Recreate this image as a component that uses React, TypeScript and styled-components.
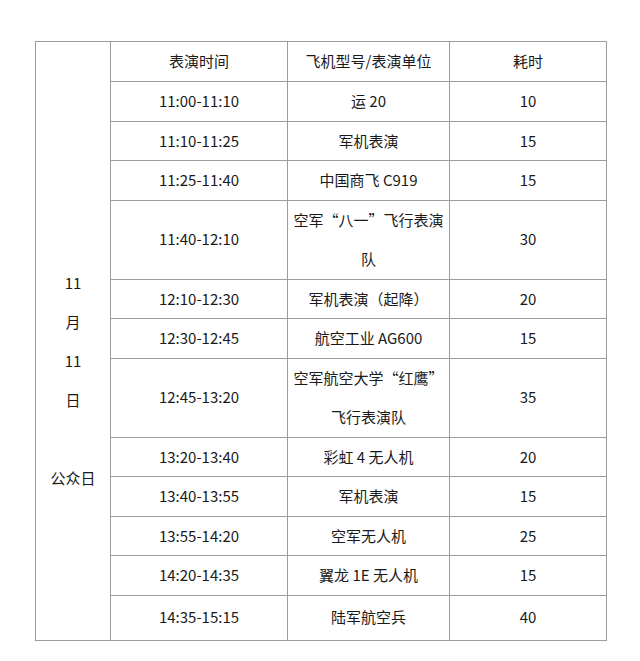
import { Fragment } from 'react';
import styled, { createGlobalStyle } from 'styled-components';

const GlobalStyle = createGlobalStyle`
  html, body {
    margin: 0;
    padding: 0;
    background: #fff;
  }
  body {
    font-family: "Noto Sans CJK SC", "Noto Sans", sans-serif;
    color: #1a1a1a;
  }
`;

const Page = styled.div`
  width: 640px;
  height: 661px;
  padding: 41px 0 0 35px;
  box-sizing: border-box;
  background: #fff;
`;

const Table = styled.table`
  border-collapse: collapse;
  table-layout: fixed;
  width: 571px;
  font-size: 15px;
`;

const Cell = styled.td`
  border: 1px solid #9c9c9c;
  text-align: center;
  vertical-align: middle;
  padding: 0;
  line-height: 38.5px;
  white-space: nowrap;
`;

const DateCell = styled(Cell)`
  padding-top: 78px;
  line-height: 39px;
`;

const Row = styled.tr<{ $h: number }>`
  height: ${p => p.$h}px;
`;

interface Item {
  time: string;
  unit: string[];
  mins: string;
}

const items: Item[] = [
  { time: '11:00-11:10', unit: ['运 20'], mins: '10' },
  { time: '11:10-11:25', unit: ['军机表演'], mins: '15' },
  { time: '11:25-11:40', unit: ['中国商飞 C919'], mins: '15' },
  { time: '11:40-12:10', unit: ['空军“八一”飞行表演', '队'], mins: '30' },
  { time: '12:10-12:30', unit: ['军机表演（起降）'], mins: '20' },
  { time: '12:30-12:45', unit: ['航空工业 AG600'], mins: '15' },
  { time: '12:45-13:20', unit: ['空军航空大学“红鹰”', '飞行表演队'], mins: '35' },
  { time: '13:20-13:40', unit: ['彩虹 4 无人机'], mins: '20' },
  { time: '13:40-13:55', unit: ['军机表演'], mins: '15' },
  { time: '13:55-14:20', unit: ['空军无人机'], mins: '25' },
  { time: '14:20-14:35', unit: ['翼龙 1E 无人机'], mins: '15' },
  { time: '14:35-15:15', unit: ['陆军航空兵'], mins: '40' },
];

const dateLines = ['11', '月', '11', '日', '\u00a0', '公众日'];

const App = () => {
  return (
    <Page>
      <GlobalStyle />
      <Table>
        <colgroup>
          <col style={{ width: 75 }} />
          <col style={{ width: 177 }} />
          <col style={{ width: 162 }} />
          <col style={{ width: 157 }} />
        </colgroup>
        <tbody>
          <Row $h={40}>
            <DateCell rowSpan={items.length + 1}>
              {dateLines.map((l, i) => (
                <Fragment key={i}>
                  {l}
                  <br />
                </Fragment>
              ))}
            </DateCell>
            <Cell>表演时间</Cell>
            <Cell>飞机型号/表演单位</Cell>
            <Cell>耗时</Cell>
          </Row>
          {items.map((it, i) => {
            const h = i === items.length - 1 ? 45 : it.unit.length > 1 ? 79 : 39.5;
            return (
              <Row key={it.time} $h={h}>
                <Cell>{it.time}</Cell>
                <Cell>
                  {it.unit.map((u, j) => (
                    <Fragment key={j}>
                      {j > 0 && <br />}
                      {u}
                    </Fragment>
                  ))}
                </Cell>
                <Cell>{it.mins}</Cell>
              </Row>
            );
          })}
        </tbody>
      </Table>
    </Page>
  );
};

export default App;
